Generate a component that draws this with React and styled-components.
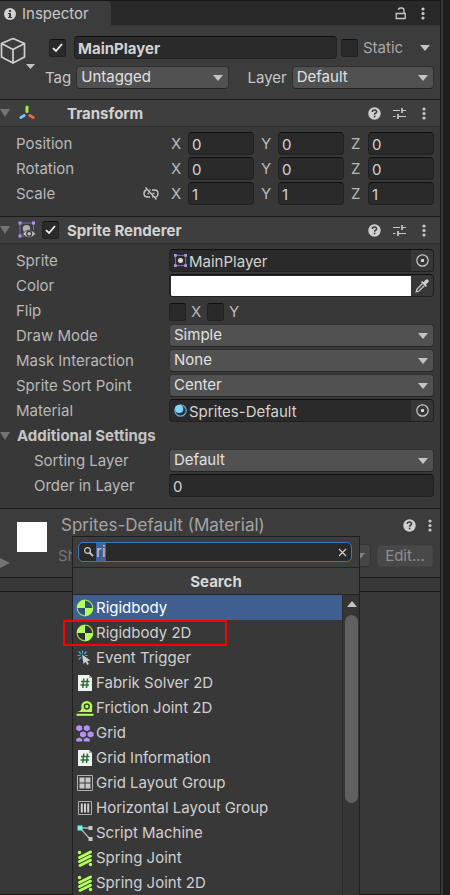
import React, { useEffect, useRef } from "react";
import styled, { createGlobalStyle, css } from "styled-components";

const GlobalStyle = createGlobalStyle`
  *, *::before, *::after { box-sizing: border-box; }
  body { margin: 0; background: #1e1e1e; }
  body, input, select, button {
    font-family: Inter, "Liberation Sans", sans-serif;
    font-size: 15px;
    line-height: 20px;
    color: #c8c8c8;
  }
  svg { display: block; flex: none; }
`;

/* ---------- layout ---------- */

const Page = styled.div`
  min-height: 100vh;
  display: flex;
  background: #1e1e1e;
  overflow: hidden;
`;

const Panel = styled.main`
  flex: 1;
  min-width: 0;
  background: #383838;
  border: 1px solid #191919;
  border-left: 0;
`;

const Gutter = styled.div`
  width: 9px;
  background: #1e1e1e;
  border-left: 2px solid #383838;
`;

const TabBar = styled.header`
  display: flex;
  justify-content: space-between;
  height: 24px;
  background: #282828;
`;

const Tab = styled.div`
  display: flex;
  align-items: center;
  gap: 6px;
  width: 111px;
  padding: 2px 0 0 4px;
  border-radius: 0 4px 0 0;
  background: #3c3c3c;
`;

const TabActions = styled.div`
  display: flex;
  align-items: center;
  gap: 4px;
  padding-right: 8px;
`;

const IconButton = styled.button`
  display: grid;
  place-items: center;
  flex: none;
  width: ${(p) => p.$w || 18}px;
  height: 20px;
  padding: 0;
  border: 0;
  background: none;
  color: #c4c4c4;
`;

const ObjectHeader = styled.section`
  display: flex;
  gap: 10px;
  height: 74px;
  padding: 11px 6px 0 0;
  background: #3c3c3c;
`;

const ObjectIcon = styled.button`
  display: flex;
  align-items: flex-start;
  flex: none;
  width: 35px;
  height: 38px;
  padding: 0;
  border: 0;
  background: none;
`;

const ObjectFields = styled.div`
  flex: 1;
  min-width: 0;
  display: flex;
  flex-direction: column;
  gap: 7px;
`;

const ObjectRow = styled.div`
  display: flex;
  align-items: center;
  height: 23px;
`;

const TagGroup = styled.label`
  display: flex;
  align-items: center;
  gap: 5px;
  flex: ${(p) => p.$grow} 1 0;
  min-width: 0;
  margin-left: ${(p) => p.$ml || 0}px;
`;

const StaticGroup = styled.div`
  display: flex;
  align-items: center;
  flex: none;
  gap: 5px;
  width: 97px;
  padding-left: 4px;
  color: #a8a8a8;
  label { flex: 1; }
`;

const Section = styled.section`
  border-top: 1px solid #1a1a1a;
`;

const SectionHeader = styled.div`
  display: flex;
  align-items: center;
  height: 27px;
  padding-right: 7px;
  background: #3e3e3e;
  border-bottom: 1px solid #303030;
`;

const SectionTitle = styled.h2`
  flex: 1;
  margin: 0;
  padding-top: 1px;
  font-size: 15px;
  font-weight: 700;
  color: #d2d2d2;
`;

const Slot = styled.span`
  display: flex;
  align-items: center;
  flex: none;
  width: ${(p) => p.$w}px;
  padding-left: ${(p) => p.$pl || 0}px;
`;

const HeaderActions = styled.div`
  display: flex;
  gap: 7px;
`;

const SectionBody = styled.div`
  padding: 5px 6px 9px 16px;
`;

const Row = styled.div`
  display: grid;
  grid-template-columns: 153px minmax(0, 1fr);
  height: 25px;
`;

const RowLabel = styled.label`
  display: flex;
  align-items: center;
  justify-content: space-between;
  height: 23px;
  padding: 0 10px 0 ${(p) => (p.$indent ? 18 : 0)}px;
  color: #b8b8b8;
`;

const Foldout = styled.button`
  display: flex;
  align-items: center;
  gap: 7px;
  height: 24px;
  margin: 0 0 1px -16px;
  padding: 0;
  border: 0;
  background: none;
  font-weight: 700;
  color: #c4c4c4;
`;

/* ---------- controls ---------- */

const fieldBox = css`
  height: 23px;
  border: 1px solid #212121;
  border-top-color: #0f0f0f;
  border-radius: 4px;
  background: #2a2a2a;
`;

const TextField = styled.input`
  ${fieldBox}
  width: 100%;
  min-width: 0;
  padding: 2px 3px 0;
  outline: 0;
  color: #d2d2d2;
  font-weight: ${(p) => (p.$bold ? 700 : 400)};
`;

const SelectWrap = styled.span`
  display: grid;
  grid-template-columns: minmax(0, 1fr) 16px;
  align-items: center;
  width: 100%;
  min-width: 0;
  height: 23px;
  opacity: ${(p) => (p.$dim ? 0.5 : 1)};
  select {
    grid-area: 1 / 1 / 2 / 3;
    width: 100%;
    height: 23px;
    padding: 0 20px 2px 4px;
    border: 1px solid #303030;
    border-bottom-color: #242424;
    border-radius: 4px;
    background: #515151;
    color: #e0e0e0;
    appearance: none;
    outline: 0;
  }
  svg { grid-area: 1 / 2; pointer-events: none; }
`;

const CheckWrap = styled.span`
  display: grid;
  flex: none;
  width: 17px;
  height: 18px;
  input {
    grid-area: 1 / 1;
    width: 17px;
    height: 18px;
    margin: 0;
    border: 1px solid #212121;
    border-top-color: #0f0f0f;
    border-radius: 3px;
    background: #2a2a2a;
    appearance: none;
  }
  svg { grid-area: 1 / 1; place-self: center; pointer-events: none; visibility: hidden; }
  input:checked + svg { visibility: visible; }
`;

const Axes = styled.div`
  display: grid;
  grid-template-columns: repeat(3, minmax(0, 1fr));
  gap: 5px;
`;

const Axis = styled.label`
  display: grid;
  grid-template-columns: 17px minmax(0, 1fr);
  align-items: center;
  height: 23px;
  padding-left: 2px;
  color: #b8b8b8;
`;

const ObjectField = styled.div`
  ${fieldBox}
  display: flex;
  align-items: center;
  gap: 2px;
  padding-left: 4px;
  color: #d2d2d2;
  overflow: hidden;
  > span { flex: 1; padding-top: 2px; }
  > button { width: 22px; height: 21px; background: #373737; }
`;

const ColorField = styled(ObjectField)`
  gap: 0;
  padding-left: 1px;
`;

const Swatch = styled.input`
  flex: 1;
  min-width: 0;
  height: 20px;
  padding: 0;
  border: 0;
  background: #fff;
  appearance: none;
  &::-webkit-color-swatch-wrapper { padding: 0; }
  &::-webkit-color-swatch { border: 0; border-radius: 0; }
`;

const FlipGroup = styled.div`
  display: flex;
  align-items: center;
  height: 25px;
  color: #b8b8b8;
  label { display: flex; align-items: center; gap: 5px; width: 38px; }
`;

/* ---------- material ---------- */

const Material = styled.section`
  position: relative;
  display: flex;
  height: 70px;
  border-top: 1px solid #1a1a1a;
  border-bottom: 1px solid #1a1a1a;
  background: #3c3c3c;
`;

const MaterialPreview = styled.div`
  display: flex;
  align-items: flex-end;
  flex: none;
  width: 58px;
  padding-bottom: 9px;
  gap: 7px;
`;

const PreviewTile = styled.div`
  align-self: flex-start;
  width: 30px;
  height: 30px;
  margin-top: 13px;
  background: #fff;
`;

const MaterialMain = styled.div`
  flex: 1;
  min-width: 0;
  padding: 6px 7px 0 0;
`;

const MaterialHead = styled.div`
  display: flex;
  align-items: center;
  justify-content: space-between;
  height: 20px;
  padding-left: 3px;
  margin-right: -4px;
  font-size: 17px;
  color: #a4a4a4;
`;

const ShaderRow = styled.div`
  display: grid;
  grid-template-columns: 72px minmax(0, 1fr) 56px;
  gap: 6px;
  align-items: center;
  margin-top: 9px;
  color: #777;
`;

const EditButton = styled.button`
  height: 22px;
  padding: 0;
  border: 1px solid #444;
  border-radius: 3px;
  background: #484848;
  color: #8e8e8e;
`;

const Strip = styled.div`
  height: 14px;
  border-bottom: 1px solid #1a1a1a;
`;

/* ---------- component search popup ---------- */

const Popup = styled.div`
  position: absolute;
  z-index: 1;
  left: 72px;
  top: 27px;
  width: 288px;
  background: #383838;
  border: 1px solid #202020;
  border-bottom: 0;
`;

const SearchArea = styled.div`
  height: 31px;
  padding: 5px 7px 0 5px;
  background: #3c3c3c;
  border-bottom: 1px solid #242424;
`;

const SearchBox = styled.div`
  display: flex;
  align-items: center;
  height: 20px;
  padding: 0 4px;
  border: 1px solid #3a79bb;
  border-radius: 5px;
  background: #2a2a2a;
  input {
    flex: 1;
    min-width: 0;
    height: 18px;
    padding: 0;
    border: 0;
    outline: 0;
    background: none;
    line-height: 18px;
    color: #c8c8c8;
  }
  input::selection { background: #3d6298; color: #c8c8c8; }
`;

const PopupTitle = styled.h3`
  height: 27px;
  margin: 0;
  border-bottom: 1px solid #242424;
  background: #3e3e3e;
  font-size: 15px;
  font-weight: 700;
  line-height: 27px;
  text-align: center;
  color: #d8d8d8;
`;

const Results = styled.div`
  display: grid;
  grid-template-columns: minmax(0, 1fr) 17px;
`;

const ResultList = styled.ul`
  margin: 0;
  padding: 0;
  list-style: none;
`;

const ResultItem = styled.li`
  position: relative;
  height: 25px;
`;

const Result = styled.button`
  display: flex;
  align-items: center;
  gap: 2px;
  width: 100%;
  height: 25px;
  padding: 0 0 0 3px;
  border: 0;
  text-align: left;
  background: ${(p) => (p.$active ? "#3e5f8f" : "transparent")};
  color: ${(p) => (p.$active ? "#fff" : "#d0d0d0")};
`;

const Highlight = styled.span`
  position: absolute;
  z-index: 2;
  left: -10px;
  top: 0;
  width: 164px;
  height: 26px;
  border: 2px solid #f00;
  pointer-events: none;
`;

const ScrollBar = styled.div`
  display: flex;
  flex-direction: column;
  align-items: center;
  gap: 8px;
  padding: 6px 0 0 1px;
  background: #353535;
  border-left: 1px solid #2b2b2b;
`;

const Thumb = styled.div`
  width: 13px;
  height: 188px;
  border-radius: 7px;
  background: #606060;
`;

/* ---------- icons ---------- */

const Triangle = ({ dir = "down", color = "#c4c4c4", w = 10, h = 6 }) => {
  const d = { down: "M0 0H10L5 6Z", up: "M0 6H10L5 0Z", right: "M0 0L10 3L0 6Z" }[dir];
  return (
    <svg width={w} height={h} viewBox="0 0 10 6" preserveAspectRatio="none">
      <path d={d} fill={color} />
    </svg>
  );
};

const InfoIcon = () => (
  <svg width="12" height="12" viewBox="0 0 12 12">
    <circle cx="6" cy="6" r="6" fill="#d2d2d2" />
    <path d="M5 2h2v2H5zM4 5h3v4h1v1H4V9h1V6H4z" fill="#3c3c3c" />
  </svg>
);

const LockIcon = () => (
  <svg width="12" height="13" viewBox="0 0 12 13" fill="none" stroke="#c8c8c8" strokeWidth="1.3">
    <path d="M1.2 6.5h9v5h-9zM9 6.5V3.2Q9 1 6.500 1H5.500Q3.500 1 3.500 3" />
  </svg>
);

const DotsIcon = () => (
  <svg width="4" height="13" viewBox="0 0 4 13" fill="#c8c8c8">
    <circle cx="2" cy="2" r="1.6" />
    <circle cx="2" cy="6.500" r="1.6" />
    <circle cx="2" cy="11" r="1.6" />
  </svg>
);

const HelpIcon = () => (
  <svg width="13" height="13" viewBox="0 0 13 13">
    <circle cx="6.500" cy="6.500" r="6.200" fill="#d0d0d0" />
    <path d="M4.400 5V4.500Q4.400 2.900 6.500 2.900T8.600 4.700Q8.600 5.700 7.500 6.200Q6.600 6.600 6.600 7.700" fill="none" stroke="#3a3a3a" strokeWidth="1.500" />
    <path d="M5.800 8.700h1.600v1.600H5.800z" fill="#3a3a3a" />
  </svg>
);

const PresetIcon = () => (
  <svg width="13" height="13" viewBox="0 0 13 13" stroke="#c8c8c8" fill="none">
    <path d="M0 3.500h7M9 3.500h4M0 9.500h2.500M5 9.500h8" strokeWidth="1.200" />
    <path d="M9 1v5M5 7v5" strokeWidth="1.700" />
  </svg>
);

const CubeIcon = () => (
  <svg width="26" height="28" viewBox="0 0 26 28" fill="none" stroke="#d0d0d0" strokeWidth="1.700" strokeLinejoin="round">
    <path d="M13 2.500L24.500 7.500V21L13 27L1.500 21V7.500ZM1.500 7.500L13 13.500L24.500 7.500M13 13.500V27" />
  </svg>
);

const TransformIcon = () => (
  <svg width="17" height="16" viewBox="0 0 17 16" strokeWidth="3" strokeLinecap="round">
    <path d="M9 2v4.500" stroke="#a3e84a" />
    <path d="M6.200 10.500L2.800 12.500" stroke="#6cc8f5" />
    <path d="M11.800 10.500L15.200 12.500" stroke="#f2653a" />
  </svg>
);

const SpriteFrame = ({ size = 14, children }) => (
  <svg width={size} height={size} viewBox="0 0 14 14">
    <path d="M1.500 1.500h11v11h-11z" fill="none" stroke="#8a6bd0" strokeWidth="1" />
    {children}
    <path d="M0 0h3v3H0zM11 0h3v3h-3zM0 11h3v3H0zM11 11h3v3h-3z" fill="#b392f0" />
  </svg>
);

const RendererIcon = () => (
  <svg width="18" height="18" viewBox="0 0 18 18">
    <path d="M2 15V2H15.500V9M2 15H6" fill="none" stroke="#7f66b5" />
    <circle cx="8.500" cy="7.800" r="3.700" fill="#b0b0b0" />
    <path d="M4.500 13Q11 5 17.700 13Q11 20 4.500 13Z" fill="#c4c4c4" stroke="#3e3e3e" strokeWidth=".8" />
    <circle cx="11.200" cy="12.700" r="2.400" fill="#c4c4c4" stroke="#3e3e3e" strokeWidth="1.400" />
    <path d="M.5.500h3v3h-3zM14 .500h3v3h-3zM.5 13.500h3v3h-3z" fill="#b392f0" />
  </svg>
);

const UnlinkIcon = () => (
  <svg width="16" height="13" viewBox="0 0 16 13" fill="none" stroke="#c4c4c4" strokeWidth="1.400">
    <path d="M7 10H4.500Q1 10 1 6.500Q1 3.500 3.500 3M6.500 3H7.500M9 3H11.500Q15 3 15 6.500Q15 9.500 12.500 10M9 10H9.800M4.500 6.500H6M9.500 6.500H11.500M2.500 .500L13.500 12.500" />
  </svg>
);

const TargetIcon = () => (
  <svg width="13" height="13" viewBox="0 0 13 13">
    <circle cx="6.500" cy="6.500" r="5.700" fill="none" stroke="#c8c8c8" strokeWidth="1.200" />
    <path d="M5 5h3v3H5z" fill="#d0d0d0" />
  </svg>
);

const DropperIcon = () => (
  <svg width="14" height="14" viewBox="0 0 14 14">
    <path d="M7.500 4.500L2 10L1.200 12.800L4 12L9.500 6.500" fill="none" stroke="#c8c8c8" strokeWidth="1.300" />
    <path d="M6 3L7.200 2L8.500 3.200L10.500 1Q12 -.3 13.200 1T13 3.500L10.800 5.500L12 6.800L11 8Z" fill="#d0d0d0" />
  </svg>
);

const MaterialIcon = () => (
  <svg width="13" height="13" viewBox="0 0 13 13">
    <circle cx="6.500" cy="6.500" r="5.700" fill="#203440" stroke="#68aac8" strokeWidth="1.200" />
    <circle cx="5.200" cy="5" r="4.100" fill="#7fd6fd" />
  </svg>
);

const TickIcon = () => (
  <svg width="11" height="10" viewBox="0 0 11 10" fill="none" stroke="#f0f0f0" strokeWidth="1.800">
    <path d="M1 5.200L4 8L10 1" />
  </svg>
);

const SearchIcon = () => (
  <svg width="13" height="12" viewBox="0 0 13 12" fill="none" stroke="#c4c4c4">
    <circle cx="4.500" cy="4.500" r="2.900" strokeWidth="1.300" />
    <path d="M6.500 6.500L10 10" strokeWidth="1.800" />
  </svg>
);

const CloseIcon = () => (
  <svg width="9" height="9" viewBox="0 0 9 9" stroke="#d0d0d0" strokeWidth="1.200">
    <path d="M1 1L8 8M8 1L1 8" />
  </svg>
);

const art = {
  rigid: (
    <>
      <circle cx="9" cy="9" r="7.800" fill="#000" fillOpacity=".15" stroke="#98d850" strokeWidth="1.200" />
      <path d="M9 9H1A8 8 0 0 1 9 1ZM9 9H17A8 8 0 0 1 9 17Z" fill="#b2ff5c" />
    </>
  ),
  event: (
    <>
      <path d="M6.500 1.500v3M2.700 2.500L5 5M10.500 2.500L8.300 5M1.500 6.500h3M2.700 10.500L5 8.300M9 6.500h2.500" stroke="#5aa7d0" strokeWidth="1.200" />
      <path d="M6 5.500L14.500 11.500L11.200 12L12.800 15L11.300 16L9.500 12.800L7.500 15Z" fill="#d0d0d0" />
    </>
  ),
  script: (
    <>
      <path d="M2 1h11l3 3v13H2z" fill="#eef2ee" />
      <path d="M13 1l3 3h-3z" fill="#a8aca8" />
      <path d="M7.800 4.500L6.800 14M11.500 4.500L10.500 14M5 7.500h8.500M4.500 11H13" stroke="#2f6b40" strokeWidth="1.500" />
    </>
  ),
  friction: (
    <>
      <path d="M1 13Q5.500 12.500 6 8H16V13Z" fill="#b2ff5c" />
      <circle cx="10.800" cy="7.500" r="5.500" fill="#b2ff5c" />
      <circle cx="10.800" cy="7.500" r="2.400" fill="none" stroke="#3a4a28" strokeWidth="1.500" />
      <path d="M.5 14.800h17v2H.5z" fill="#b2ff5c" />
    </>
  ),
  grid: (
    <path
      d="M3.200 1L6.200 2.500V5.700L3.200 7.200L.2 5.700V2.500ZM10.800 1L13.800 2.500V5.700L10.800 7.200L7.800 5.700V2.500ZM7 7.200L10 8.700V11.900L7 13.400L4 11.900V8.700ZM14.600 7.200L17.600 8.700V11.900L14.600 13.400L11.600 11.900V8.700ZM3.200 13.400L6.200 14.900V17.500H.2V14.900ZM10.800 13.400L13.800 14.900V17.500H7.800V14.900Z"
      fill="#b392f0"
    />
  ),
  layout: (
    <>
      <path d="M1.500 1.500h15v15h-15z" fill="none" stroke="#b0b0b0" />
      <path d="M3.500 3.500h5v5h-5zM9.500 3.500h5v5h-5zM3.500 9.500h5v5h-5zM9.500 9.500h5v5h-5z" fill="#c8c8c8" />
    </>
  ),
  horizontal: (
    <>
      <path d="M2.500 2.500h13v13h-13z" fill="none" stroke="#b0b0b0" />
      <path d="M4.800 4.500h2v9h-2zM8 4.500h2v9H8zM11.200 4.500h2v9h-2z" fill="#d0d0d0" />
    </>
  ),
  machine: (
    <>
      <path d="M6 4h7M5 5L13 14" stroke="#b0b0b0" strokeWidth="1.300" />
      <path d="M1.500 1.500h5v5h-5z" fill="#6ff5e0" />
      <path d="M12.500 2h4v4h-4zM12.500 13h4v4h-4z" fill="#c8c8c8" />
    </>
  ),
  spring: (
    <>
      <path d="M3.500 8.500L14.500 3M3.500 12.600L14.500 7.100M4 16.400L14.500 11.200" stroke="#b2ff5c" strokeWidth="2.800" strokeLinecap="round" />
      <circle cx="3.500" cy="3.500" r="1.700" fill="#b2ff5c" />
      <circle cx="14.500" cy="15.500" r="1.700" fill="#b2ff5c" />
    </>
  ),
};

const ItemIcon = ({ kind }) => (
  <svg width="18" height="18" viewBox="0 0 18 18" fill="none">
    {art[kind]}
  </svg>
);

/* ---------- composed parts ---------- */

const Check = (props) => (
  <CheckWrap>
    <input type="checkbox" {...props} />
    <TickIcon />
  </CheckWrap>
);

const Select = ({ id, value, dim, label }) => (
  <SelectWrap $dim={dim}>
    <select id={id} aria-label={label} defaultValue={value}>
      <option>{value}</option>
    </select>
    <Triangle />
  </SelectWrap>
);

const ComponentActions = () => (
  <HeaderActions>
    <IconButton aria-label="Help"><HelpIcon /></IconButton>
    <IconButton aria-label="Presets"><PresetIcon /></IconButton>
    <IconButton aria-label="More options"><DotsIcon /></IconButton>
  </HeaderActions>
);

const VectorRow = ({ name, value, icon }) => (
  <Row>
    <RowLabel as="span">{name}{icon}</RowLabel>
    <Axes role="group" aria-label={name}>
      {["X", "Y", "Z"].map((axis) => (
        <Axis key={axis}>
          {axis}
          <TextField defaultValue={value} />
        </Axis>
      ))}
    </Axes>
  </Row>
);

const SelectRow = ({ id, name, value, indent }) => (
  <Row>
    <RowLabel htmlFor={id} $indent={indent}>{name}</RowLabel>
    <Select id={id} value={value} />
  </Row>
);

const results = [
  ["rigid", "Rigidbody"],
  ["rigid", "Rigidbody 2D"],
  ["event", "Event Trigger"],
  ["script", "Fabrik Solver 2D"],
  ["friction", "Friction Joint 2D"],
  ["grid", "Grid"],
  ["script", "Grid Information"],
  ["layout", "Grid Layout Group"],
  ["horizontal", "Horizontal Layout Group"],
  ["machine", "Script Machine"],
  ["spring", "Spring Joint"],
  ["spring", "Spring Joint 2D"],
];

function ComponentSearch() {
  const input = useRef(null);
  useEffect(() => {
    input.current.focus();
    input.current.select();
  }, []);
  return (
    <Popup>
      <SearchArea>
        <SearchBox>
          <SearchIcon />
          <input ref={input} aria-label="Search components" defaultValue="ri" />
          <IconButton $w={9} aria-label="Clear search"><CloseIcon /></IconButton>
        </SearchBox>
      </SearchArea>
      <PopupTitle>Search</PopupTitle>
      <Results>
        <ResultList>
          {results.map(([kind, name], i) => (
            <ResultItem key={name}>
              <Result $active={i === 0}><ItemIcon kind={kind} />{name}</Result>
              {i === 1 && <Highlight />}
            </ResultItem>
          ))}
        </ResultList>
        <ScrollBar>
          <Triangle dir="up" />
          <Thumb />
        </ScrollBar>
      </Results>
    </Popup>
  );
}

export default function App() {
  return (
    <>
      <GlobalStyle />
      <Page>
        <Panel>
          <TabBar>
            <Tab><InfoIcon />Inspector</Tab>
            <TabActions>
              <IconButton aria-label="Lock"><LockIcon /></IconButton>
              <IconButton aria-label="Panel options"><DotsIcon /></IconButton>
            </TabActions>
          </TabBar>

          <ObjectHeader>
            <ObjectIcon aria-label="Object icon">
              <CubeIcon />
              <svg width="9" height="34" viewBox="0 0 9 34"><path d="M0 28h9l-4.500 5z" fill="#c4c4c4" /></svg>
            </ObjectIcon>
            <ObjectFields>
              <ObjectRow>
                <Slot $w={29} $pl={4}><Check aria-label="Active" defaultChecked /></Slot>
                <TextField aria-label="Object name" defaultValue="MainPlayer" $bold />
                <StaticGroup>
                  <Check id="static" />
                  <label htmlFor="static">Static</label>
                  <IconButton $w={18} aria-label="Static options"><Triangle /></IconButton>
                </StaticGroup>
              </ObjectRow>
              <ObjectRow>
                <TagGroup $grow={184}>Tag<Select value="Untagged" /></TagGroup>
                <TagGroup $grow={187} $ml={19}>Layer<Select value="Default" /></TagGroup>
              </ObjectRow>
            </ObjectFields>
          </ObjectHeader>

          <Section>
            <SectionHeader>
              <Slot $w={18}><Triangle color="#747474" h={8} /></Slot>
              <Slot $w={49}><TransformIcon /></Slot>
              <SectionTitle>Transform</SectionTitle>
              <ComponentActions />
            </SectionHeader>
            <SectionBody>
              <VectorRow name="Position" value="0" />
              <VectorRow name="Rotation" value="0" />
              <VectorRow name="Scale" value="1" icon={<UnlinkIcon />} />
            </SectionBody>
          </Section>

          <Section>
            <SectionHeader>
              <Slot $w={18}><Triangle color="#747474" h={8} /></Slot>
              <Slot $w={24}><RendererIcon /></Slot>
              <Slot $w={25}><Check aria-label="Sprite Renderer enabled" defaultChecked /></Slot>
              <SectionTitle>Sprite Renderer</SectionTitle>
              <ComponentActions />
            </SectionHeader>
            <SectionBody>
              <Row>
                <RowLabel as="span">Sprite</RowLabel>
                <ObjectField>
                  <SpriteFrame size={13}><circle cx="7" cy="7" r="2.700" fill="#d8d8d8" /></SpriteFrame>
                  <span>MainPlayer</span>
                  <IconButton aria-label="Select sprite"><TargetIcon /></IconButton>
                </ObjectField>
              </Row>
              <Row>
                <RowLabel htmlFor="color">Color</RowLabel>
                <ColorField>
                  <Swatch id="color" type="color" defaultValue="#ffffff" />
                  <IconButton aria-label="Pick color"><DropperIcon /></IconButton>
                </ColorField>
              </Row>
              <Row>
                <RowLabel as="span">Flip</RowLabel>
                <FlipGroup>
                  <label><Check />X</label>
                  <label><Check />Y</label>
                </FlipGroup>
              </Row>
              <SelectRow id="draw" name="Draw Mode" value="Simple" />
              <SelectRow id="mask" name="Mask Interaction" value="None" />
              <SelectRow id="sort" name="Sprite Sort Point" value="Center" />
              <Row>
                <RowLabel as="span">Material</RowLabel>
                <ObjectField>
                  <MaterialIcon />
                  <span>Sprites-Default</span>
                  <IconButton aria-label="Select material"><TargetIcon /></IconButton>
                </ObjectField>
              </Row>
              <Foldout aria-expanded="true">
                <Triangle color="#747474" h={8} />
                Additional Settings
              </Foldout>
              <SelectRow id="layer" name="Sorting Layer" value="Default" indent />
              <Row>
                <RowLabel htmlFor="order" $indent>Order in Layer</RowLabel>
                <TextField id="order" defaultValue="0" />
              </Row>
            </SectionBody>
          </Section>

          <Material>
            <MaterialPreview>
              <Triangle dir="right" color="#747474" h={10} />
              <PreviewTile />
            </MaterialPreview>
            <MaterialMain>
              <MaterialHead>
                Sprites-Default (Material)
                <HeaderActions>
                  <IconButton $w={14} aria-label="Help"><HelpIcon /></IconButton>
                  <IconButton $w={14} aria-label="More options"><DotsIcon /></IconButton>
                </HeaderActions>
              </MaterialHead>
              <ShaderRow>
                <label htmlFor="shader">Shader</label>
                <Select id="shader" value="Sprites/Default" dim />
                <EditButton>Edit...</EditButton>
              </ShaderRow>
            </MaterialMain>
            <ComponentSearch />
          </Material>
          <Strip />
        </Panel>
        <Gutter />
      </Page>
    </>
  );
}
